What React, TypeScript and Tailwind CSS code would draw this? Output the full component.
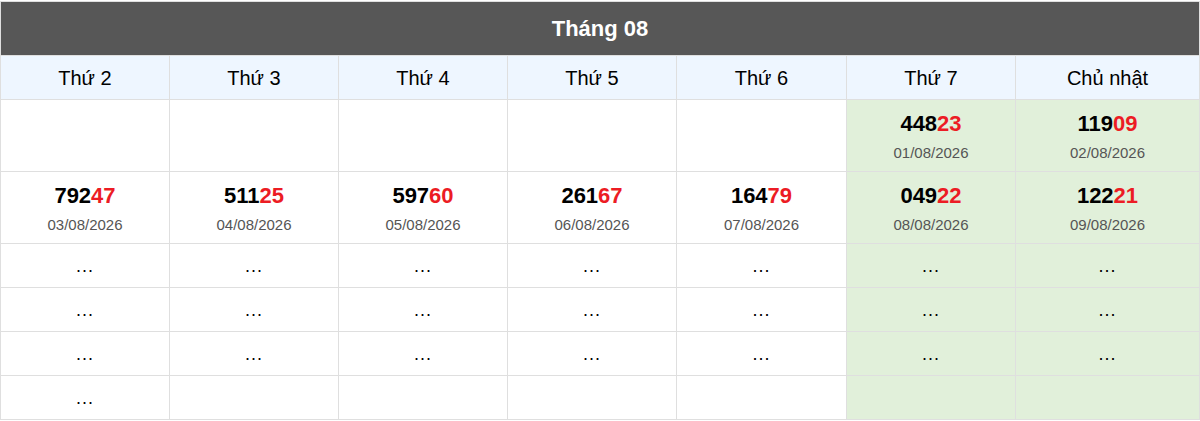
import React from "react";

type Cell = { num: string; date: string } | "dots" | null;

const days = ["Thứ 2", "Thứ 3", "Thứ 4", "Thứ 5", "Thứ 6", "Thứ 7", "Chủ nhật"];

// rows of the month grid, one entry per weekday
const rows: { cells: Cell[]; tall: boolean }[] = [
  {
    tall: true,
    cells: [null, null, null, null, null, { num: "44823", date: "01/08/2026" }, { num: "11909", date: "02/08/2026" }],
  },
  {
    tall: true,
    cells: [
      { num: "79247", date: "03/08/2026" },
      { num: "51125", date: "04/08/2026" },
      { num: "59760", date: "05/08/2026" },
      { num: "26167", date: "06/08/2026" },
      { num: "16479", date: "07/08/2026" },
      { num: "04922", date: "08/08/2026" },
      { num: "12221", date: "09/08/2026" },
    ],
  },
  { tall: false, cells: ["dots", "dots", "dots", "dots", "dots", "dots", "dots"] },
  { tall: false, cells: ["dots", "dots", "dots", "dots", "dots", "dots", "dots"] },
  { tall: false, cells: ["dots", "dots", "dots", "dots", "dots", "dots", "dots"] },
  { tall: false, cells: ["dots", null, null, null, null, null, null] },
];

const App: React.FC = () => {
  return (
    <div className="w-[1200px] bg-white pt-px" style={{ fontFamily: '"Liberation Sans", Arial, sans-serif' }}>
      <table className="w-full table-fixed border-collapse border border-[#dfdfdf]">
        <colgroup>
          <col className="w-[169px]" />
          <col className="w-[169px]" />
          <col className="w-[169px]" />
          <col className="w-[169px]" />
          <col className="w-[170px]" />
          <col className="w-[169px]" />
          <col />
        </colgroup>
        <thead>
          <tr>
            <th colSpan={7} className="h-[54px] bg-[#575757] text-[22px] font-bold text-white">
              Tháng 08
            </th>
          </tr>
          <tr>
            {days.map((d) => (
              <th key={d} className="h-[44px] border border-[#dfdfdf] bg-[#eef6ff] text-[20px] font-normal text-black">
                {d}
              </th>
            ))}
          </tr>
        </thead>
        <tbody>
          {rows.map((row, ri) => (
            <tr key={ri} className={row.tall ? "h-[72px]" : "h-[44px]"}>
              {row.cells.map((cell, ci) => (
                <td
                  key={ci}
                  className={`border border-[#dfdfdf] p-0 text-center align-middle ${
                    ci >= 5 ? "bg-[#e1f0da]" : "bg-white"
                  }`}
                >
                  {cell === "dots" && (
                    <span className="relative top-px text-[18px] tracking-[1px] text-black">...</span>
                  )}
                  {cell && cell !== "dots" && (
                    <div className="flex flex-col items-center pt-[2px]">
                      <span className="text-[22px] font-bold leading-[26px] text-black">
                        {cell.num.slice(0, 3)}
                        <span className="text-[#ec1c24]">{cell.num.slice(3)}</span>
                      </span>
                      <span className="mt-[7px] text-[15px] leading-[18px] text-[#555555]">{cell.date}</span>
                    </div>
                  )}
                </td>
              ))}
            </tr>
          ))}
        </tbody>
      </table>
    </div>
  );
};

export default App;
